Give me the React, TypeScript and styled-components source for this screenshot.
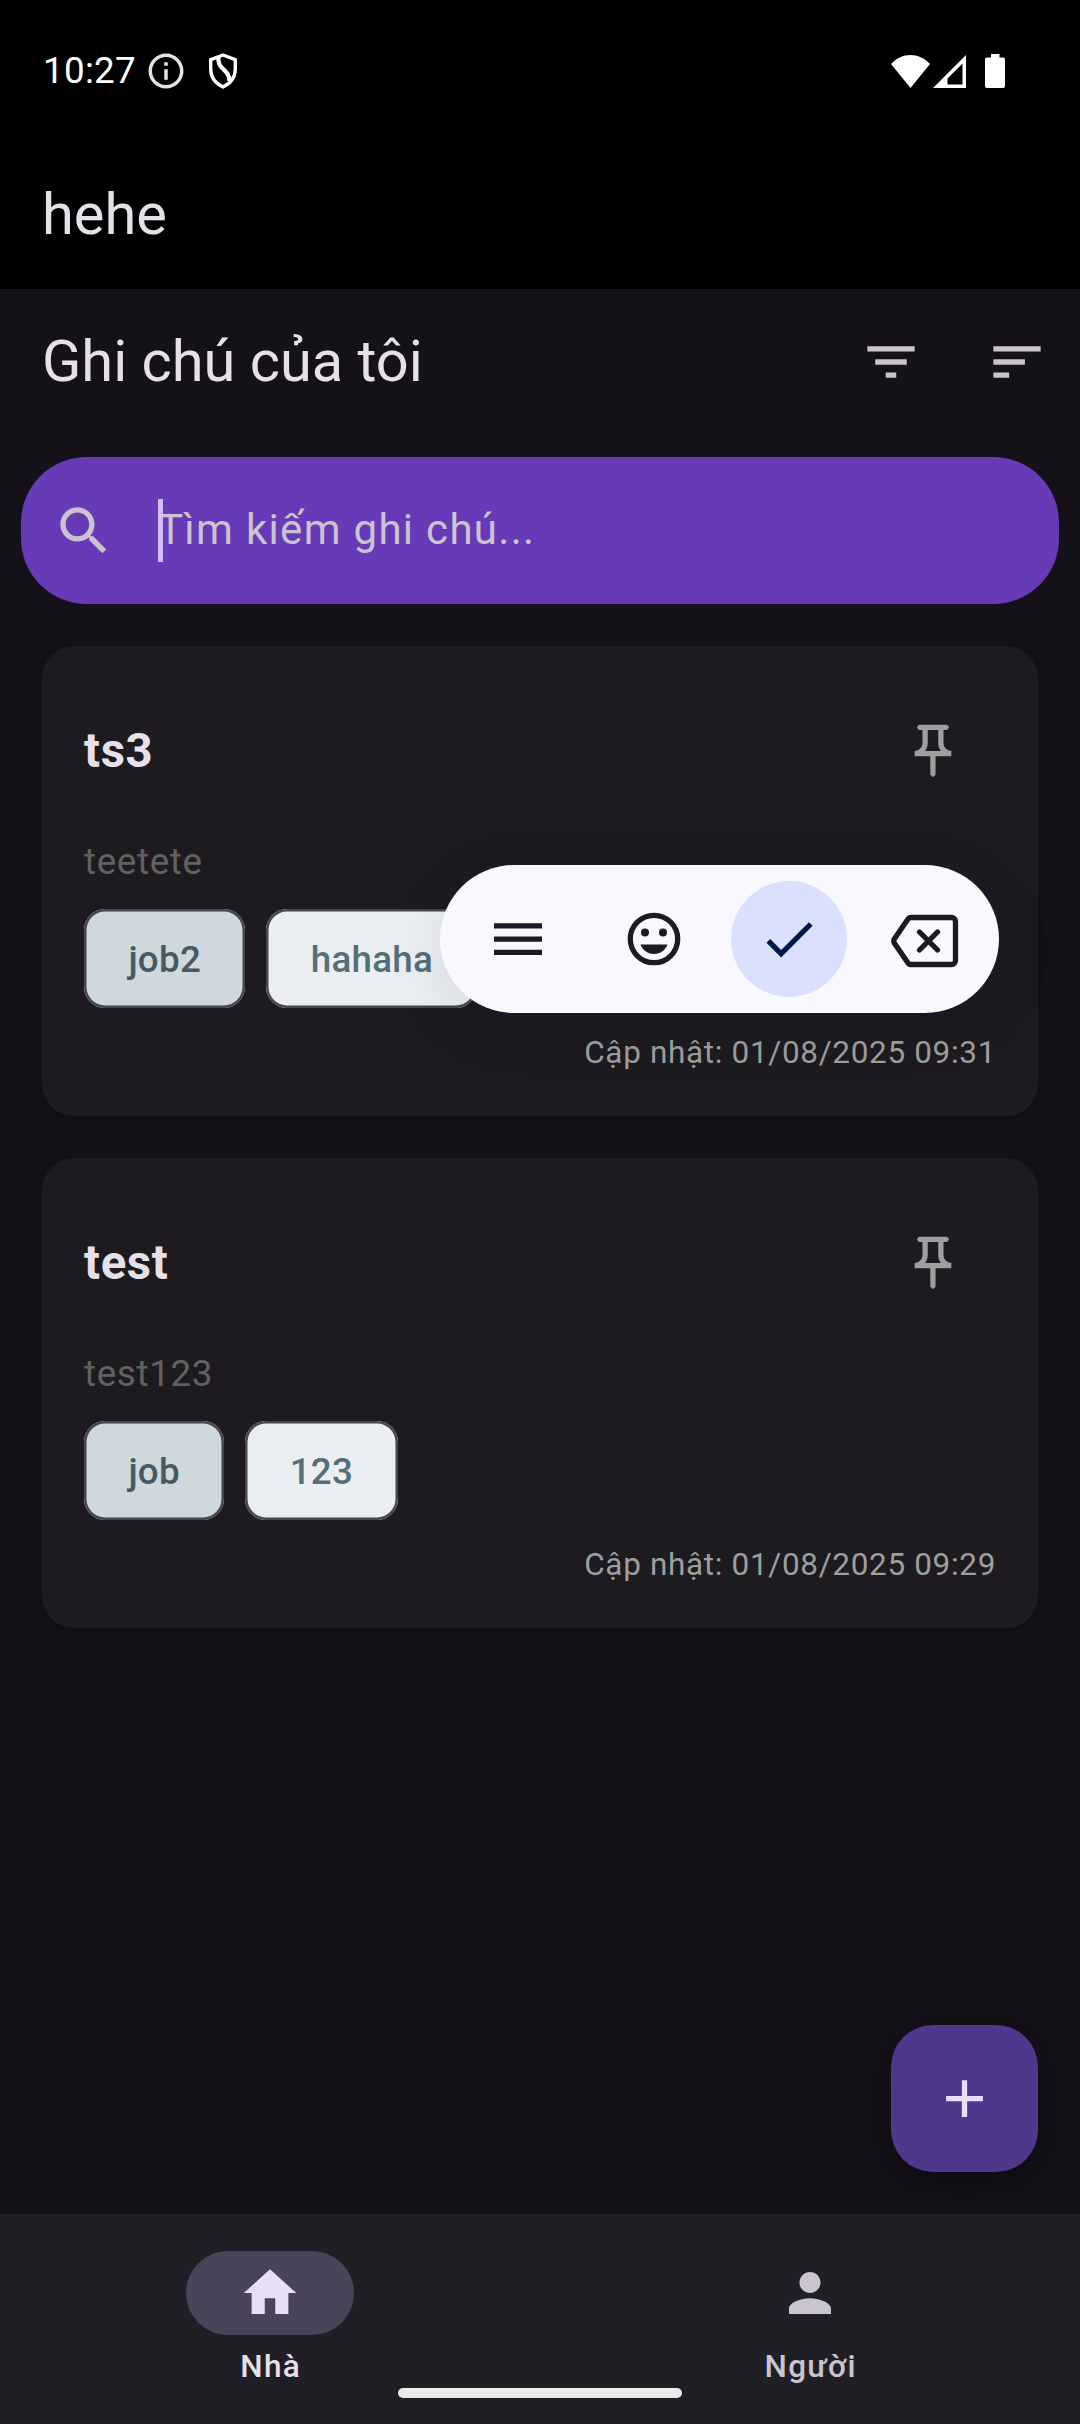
import React from 'react';
import styled, { createGlobalStyle } from 'styled-components';

const GlobalStyle = createGlobalStyle`
  *, *::before, *::after { box-sizing: border-box; }
  html, body { margin: 0; padding: 0; background: #141218; }
  body { font-family: Roboto, "Noto Sans", sans-serif; }
  svg { display: block; flex: none; }
`;

const Screen = styled.div`
  position: relative;
  display: flex;
  flex-direction: column;
  width: 1080px;
  height: 2424px;
  overflow: hidden;
  background: #141218;
  color: #e6e0e9;
`;

const TopArea = styled.header`
  height: 289px;
  flex: none;
  background: #000;
`;

const StatusBar = styled.div`
  display: flex;
  align-items: center;
  justify-content: space-between;
  height: 142px;
  padding: 0 75px 0 43px;
`;

const StatusGroup = styled.div<{ $gap: number }>`
  display: flex;
  align-items: center;
  gap: ${(p) => p.$gap}px;
`;

const Clock = styled.span`
  width: 91px;
  font-size: 36.75px;
  line-height: 42px;
  letter-spacing: 0.3px;
  color: #fff;
  white-space: nowrap;
`;

const ToolbarTitle = styled.h1`
  flex: 1;
  margin: 0;
  padding-bottom: 2px;
  font-size: 57.75px;
  font-weight: 400;
  line-height: 73px;
`;

const Toolbar = styled.div`
  display: flex;
  align-items: center;
  flex: none;
  height: 147px;
  padding-left: 42px;
`;

const IconButton = styled.button`
  display: flex;
  align-items: center;
  justify-content: center;
  width: 126px;
  height: 126px;
  padding: 0;
  border: 0;
  background: transparent;
  color: inherit;
`;

const ToolbarActions = styled.div`
  display: flex;
  margin-bottom: 1px;
  color: #cac4d0;
`;

const SearchBar = styled.div`
  display: flex;
  align-items: center;
  flex: none;
  height: 147px;
  margin: 21px 21px 0;
  border-radius: 65.6px;
  background: #673ab7;
  color: #cac4d0;
`;

const SearchField = styled.div`
  position: relative;
  margin-left: 11px;
  font-size: 42px;
  line-height: 61px;
  padding-bottom: 2px;
  letter-spacing: 1.31px;
  white-space: nowrap;
`;

const Caret = styled.span`
  position: absolute;
  left: 0;
  top: 0;
  width: 5px;
  height: 63px;
  background: #d0bcff;
`;

const NoteList = styled.main`
  display: flex;
  flex-direction: column;
  gap: 42px;
  flex: 1;
  padding: 42px;
`;

const Card = styled.article`
  display: flex;
  flex-direction: column;
  height: 470px;
  padding: 42px;
  border-radius: 31.5px;
  background: #1d1b20;
  box-shadow: 0 3px 6px rgba(0, 0, 0, 0.22), 0 1px 2px rgba(0, 0, 0, 0.1);
`;

const CardHeader = styled.div`
  display: flex;
  align-items: center;
  justify-content: space-between;
  height: 126px;
  color: #9e9e9e;
`;

const CardTitle = styled.h2`
  margin: 0;
  font-size: 47.25px;
  font-weight: 700;
  line-height: 63px;
  letter-spacing: 0.66px;
  color: #e6e0e9;
`;

const CardBody = styled.p`
  margin: 22px 0 0;
  font-size: 36.75px;
  line-height: 52px;
  letter-spacing: 0.66px;
  color: #616161;
`;

const ChipRow = styled.div`
  display: flex;
  gap: 21px;
  margin-top: 21px;
`;

const Chip = styled.span<{ $strong?: boolean }>`
  display: flex;
  align-items: center;
  height: 99px;
  padding: 1px 44.4px 0;
  border-radius: 21px;
  box-shadow: inset 0 0 0 2.5px #49454f;
  background: ${(p) => (p.$strong ? '#cfd8dc' : '#eceff1')};
  color: ${(p) => (p.$strong ? '#455a64' : '#546e7a')};
  font-size: 36.75px;
  font-weight: 500;
  letter-spacing: 0.26px;
`;

const Updated = styled.time`
  margin-top: 24px;
  align-self: flex-end;
  font-size: 31.5px;
  line-height: 42px;
  letter-spacing: 0.66px;
  color: #9e9e9e;
`;

const InputToolbar = styled.div`
  position: absolute;
  left: 440px;
  top: 865px;
  display: grid;
  grid-template-columns: repeat(4, 135.7px);
  justify-content: center;
  align-items: center;
  justify-items: center;
  width: 559px;
  height: 148px;
  padding-left: 4px;
  border-radius: 74px;
  background: #faf8ff;
  color: #1b1b21;
  box-shadow: 0 14px 60px rgba(0, 0, 0, 0.1);
`;

const ToolButton = styled.button<{ $active?: boolean }>`
  display: flex;
  align-items: center;
  justify-content: center;
  width: 116px;
  height: 116px;
  padding: 0;
  border: 0;
  border-radius: 50%;
  background: ${(p) => (p.$active ? '#dae1ff' : 'transparent')};
  color: ${(p) => (p.$active ? '#001849' : '#1b1b21')};
`;

const AddButton = styled.button`
  position: absolute;
  left: 891px;
  top: 2025px;
  display: flex;
  align-items: center;
  justify-content: center;
  width: 147px;
  height: 147px;
  padding: 0;
  border: 0;
  border-radius: 42px;
  background: #4f378b;
  color: #eaddff;
  box-shadow: 0 8px 14px rgba(0, 0, 0, 0.22), 0 6px 24px rgba(0, 0, 0, 0.12);
`;

const NavBar = styled.nav`
  display: flex;
  flex: none;
  height: 210px;
  padding-top: 37px;
  background: #211f26;
`;

const NavItem = styled.a<{ $active?: boolean }>`
  display: flex;
  flex-direction: column;
  align-items: center;
  flex: 1;
  color: ${(p) => (p.$active ? '#e6e0e9' : '#cac4d0')};
`;

const NavIndicator = styled.span<{ $active?: boolean }>`
  display: flex;
  align-items: center;
  justify-content: center;
  width: 168px;
  height: 84px;
  border-radius: 42px;
  background: ${(p) => (p.$active ? '#4a4458' : 'transparent')};
  color: ${(p) => (p.$active ? '#e8def8' : '#cac4d0')};
`;

const NavLabel = styled.span`
  margin-top: 11px;
  padding-left: 1.3px;
  font-size: 31.5px;
  font-weight: 500;
  line-height: 42px;
  letter-spacing: 1.31px;
`;

const GestureHandle = styled.div`
  position: absolute;
  left: 398px;
  top: 2388px;
  width: 284px;
  height: 10px;
  border-radius: 5px;
  background: #ececec;
`;

const Glyph = ({ d, size = 64, viewBox = '-0.19 -0.19 24.38 24.38' }: { d: string; size?: number; viewBox?: string }) => (
  <svg width={size} height={size} viewBox={viewBox} fill="currentColor">
    <path d={d} />
  </svg>
);

const ICONS = {
  info: 'M11 7h2v2h-2zm0 4h2v6h-2zm1-9C6.48 2 2 6.48 2 12s4.48 10 10 10 10-4.48 10-10S17.52 2 12 2zm0 18c-4.41 0-8-3.59-8-8s3.59-8 8-8 8 3.59 8 8-3.59 8-8 8z',
  filter: 'M10 18h4v-2h-4v2zM3 6v2h18V6H3zm3 7h12v-2H6v2z',
  sort: 'M3 18h6v-2H3v2zM3 6v2h18V6H3zm0 7h12v-2H3v2z',
  search:
    'M15.5 14h-.79l-.28-.27C15.41 12.59 16 11.11 16 9.5 16 5.91 13.09 3 9.5 3S3 5.91 3 9.5 5.91 16 9.5 16c1.61 0 3.09-.59 4.23-1.57l.27.28v.79l5 4.99L20.49 19l-4.99-5zm-6 0C7.01 14 5 11.99 5 9.5S7.01 5 9.5 5 14 7.01 14 9.5 11.99 14 9.5 14z',
  pin: 'M14 4v5c0 1.12.37 2.16 1 3H9c.65-.86 1-1.9 1-3V4h4m3-2H7c-.55 0-1 .45-1 1s.45 1 1 1h1v5c0 1.66-1.34 3-3 3v2h5.97v7l1 1 1-1v-7H19v-2c-1.66 0-3-1.34-3-3V4h1c.55 0 1-.45 1-1s-.45-1-1-1z',
  add: 'M19 13h-6v6h-2v-6H5v-2h6V5h2v6h6v2z',
  home: 'M10 20v-6h4v6h5v-8h3L12 3 2 12h3v8z',
  person: 'M12 12c2.21 0 4-1.79 4-4s-1.79-4-4-4-4 1.79-4 4 1.79 4 4 4zm0 2c-2.67 0-8 1.34-8 4v2h16v-2c0-2.66-5.33-4-8-4z',
  check: 'M9 16.17L4.83 12l-1.42 1.41L9 19 21 7l-1.41-1.41z',
};

const ShieldIcon = () => (
  <svg width="32" height="38" viewBox="0 0 32 38" fill="none" stroke="#fff" strokeWidth="3.4" strokeLinejoin="round">
    <path d="M16 3 28.3 7.6V17c0 8-5 14.500-12.300 18C8.700 31.500 3.700 25 3.700 17V7.600Z" />
    <path strokeWidth="4.2" d="M11.500 4.500C9.500 18 23 17 22.500 29" />
  </svg>
);

const WifiIcon = () => (
  <svg width="39" height="33" viewBox="0 0 39 33" fill="#fff">
    <path d="M0 9C5.500 3 12.500 0 19.500 0S33.500 3 39 9L19.500 33Z" />
  </svg>
);

const SignalIcon = () => (
  <svg width="33" height="33" viewBox="0 0 33 33" fill="#fff" fillRule="evenodd">
    <path d="M33 0V33H0ZM29.500 8.500 14.500 23.500V29.500H29.500Z" />
  </svg>
);

const BatteryIcon = () => (
  <svg width="20" height="34" viewBox="0 0 20 34" fill="#fff">
    <path d="M6 0h8.500v3.500H18a2 2 0 0 1 2 2V32a2 2 0 0 1-2 2H2a2 2 0 0 1-2-2V5.500a2 2 0 0 1 2-2H6Z" />
  </svg>
);

const MenuIcon = () => (
  <svg width="48" height="34" viewBox="0 0 48 34" fill="currentColor">
    <path d="M0 1.300h48v5.300H0zM0 14.500h48v5.300H0zM0 27.700h48v5.300H0z" />
  </svg>
);

const EmojiIcon = () => (
  <svg width="54" height="54" viewBox="0 0 54 54" fill="currentColor">
    <circle cx="27" cy="27" r="23.700" fill="none" stroke="currentColor" strokeWidth="5.300" />
    <circle cx="18" cy="20.500" r="4" />
    <circle cx="36" cy="20.500" r="4" />
    <path d="M13.500 32.500h27C38.500 38 33.500 42 27 42s-11.500-4-13.500-9.500Z" />
  </svg>
);

const BackspaceIcon = () => (
  <svg
    width="68"
    height="58"
    viewBox="0.500 -4 68 58"
    fill="none"
    stroke="currentColor"
    strokeWidth="5.300"
    strokeLinecap="round"
    strokeLinejoin="round"
  >
    <path d="M20 3.500H61a4 4 0 0 1 4 4V46.500a4 4 0 0 1-4 4H20Q18.500 50.500 17.500 49L3.800 29Q2.800 27 3.800 25L17.500 5Q18.500 3.500 20 3.500Z" />
    <path d="M29 18 47 36M47 18 29 36" />
  </svg>
);

interface Note {
  title: string;
  body: string;
  tags: string[];
  updated: string;
}

const NOTES: Note[] = [
  { title: 'ts3', body: 'teetete', tags: ['job2', 'hahaha'], updated: '01/08/2025 09:31' },
  { title: 'test', body: 'test123', tags: ['job', '123'], updated: '01/08/2025 09:29' },
];

const NoteCard = ({ note }: { note: Note }) => (
  <Card>
    <CardHeader>
      <CardTitle>{note.title}</CardTitle>
      <IconButton aria-label="Ghim">
        <Glyph d={ICONS.pin} />
      </IconButton>
    </CardHeader>
    <CardBody>{note.body}</CardBody>
    <ChipRow>
      {note.tags.map((tag, i) => (
        <Chip key={tag} $strong={i === 0}>
          {tag}
        </Chip>
      ))}
    </ChipRow>
    <Updated>Cập nhật: {note.updated}</Updated>
  </Card>
);

export default function App() {
  return (
    <>
      <GlobalStyle />
      <Screen>
        <TopArea>
          <StatusBar>
            <StatusGroup $gap={11}>
              <Clock>10:27</Clock>
              <StatusGroup $gap={20}>
                <Glyph d={ICONS.info} size={42} viewBox="0 0 24 24" />
                <ShieldIcon />
              </StatusGroup>
            </StatusGroup>
            <StatusGroup $gap={3}>
              <WifiIcon />
              <StatusGroup $gap={19}>
                <SignalIcon />
                <BatteryIcon />
              </StatusGroup>
            </StatusGroup>
          </StatusBar>
          <Toolbar>
            <ToolbarTitle>hehe</ToolbarTitle>
          </Toolbar>
        </TopArea>
        <Toolbar>
          <ToolbarTitle>Ghi chú của tôi</ToolbarTitle>
          <ToolbarActions>
            <IconButton aria-label="Lọc">
              <Glyph d={ICONS.filter} />
            </IconButton>
            <IconButton aria-label="Sắp xếp">
              <Glyph d={ICONS.sort} />
            </IconButton>
          </ToolbarActions>
        </Toolbar>
        <SearchBar>
          <IconButton as="span">
            <Glyph d={ICONS.search} />
          </IconButton>
          <SearchField>
            Tìm kiếm ghi chú...
            <Caret />
          </SearchField>
        </SearchBar>
        <NoteList>
          {NOTES.map((note) => (
            <NoteCard key={note.title} note={note} />
          ))}
        </NoteList>
        <NavBar>
          <NavItem $active>
            <NavIndicator $active>
              <Glyph d={ICONS.home} />
            </NavIndicator>
            <NavLabel>Nhà</NavLabel>
          </NavItem>
          <NavItem>
            <NavIndicator>
              <Glyph d={ICONS.person} />
            </NavIndicator>
            <NavLabel>Người</NavLabel>
          </NavItem>
        </NavBar>
        <InputToolbar>
          <ToolButton aria-label="Menu">
            <MenuIcon />
          </ToolButton>
          <ToolButton aria-label="Emoji">
            <EmojiIcon />
          </ToolButton>
          <ToolButton $active aria-label="OK">
            <Glyph d={ICONS.check} />
          </ToolButton>
          <ToolButton aria-label="Xóa">
            <BackspaceIcon />
          </ToolButton>
        </InputToolbar>
        <AddButton aria-label="Thêm">
          <Glyph d={ICONS.add} size={63} viewBox="0 0 24 24" />
        </AddButton>
        <GestureHandle />
      </Screen>
    </>
  );
}
